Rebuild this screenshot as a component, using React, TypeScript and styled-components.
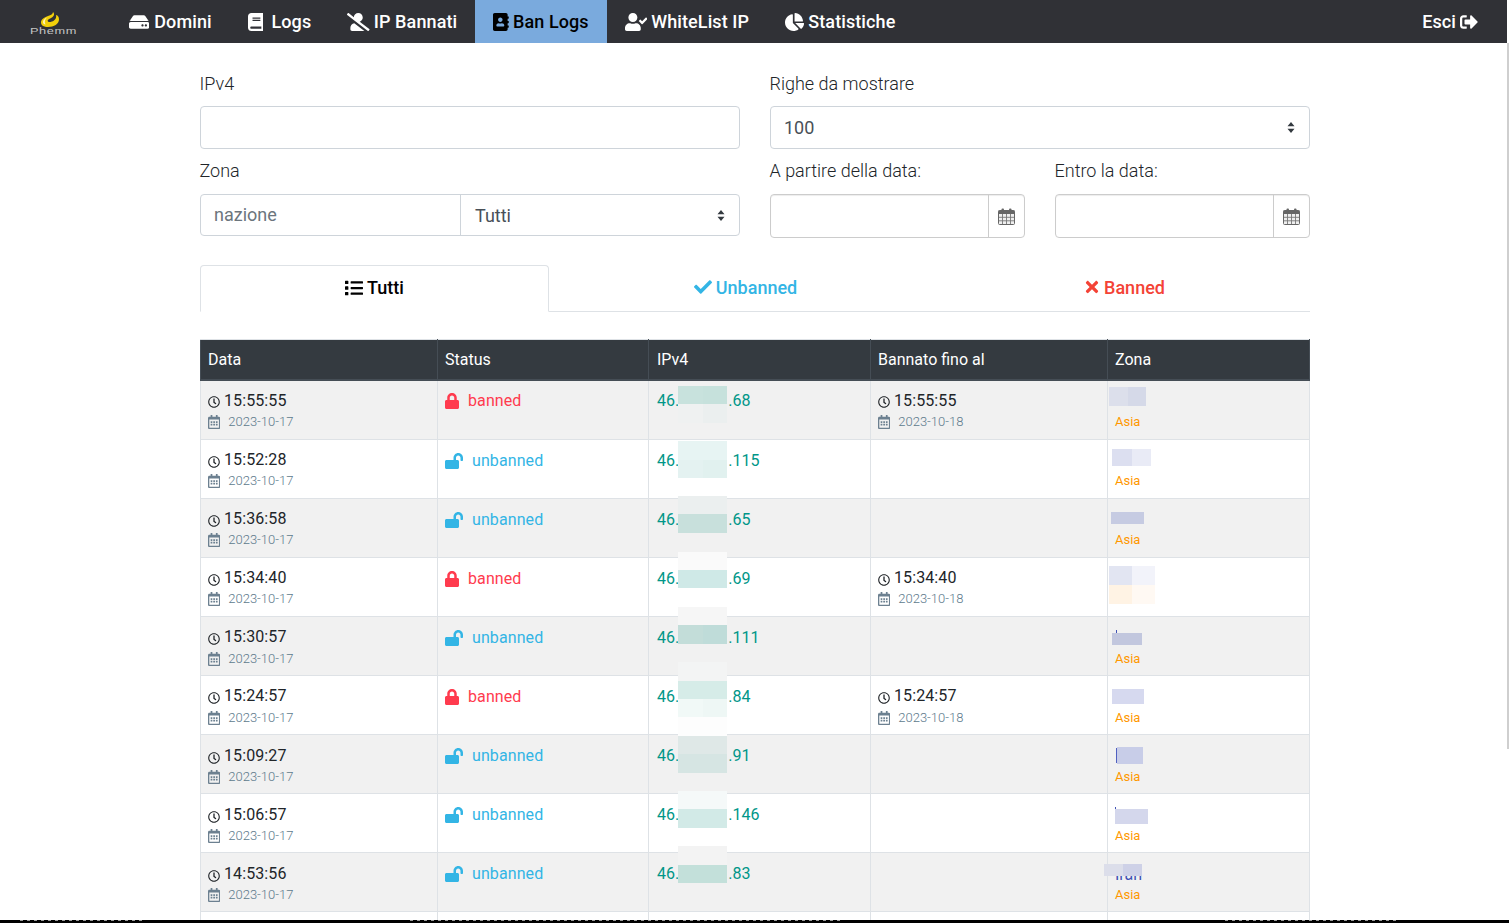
import React from "react"
import styled, { createGlobalStyle } from "styled-components"
import {
  FaAddressBook,
  FaBook,
  FaChartPie,
  FaCheck,
  FaHdd,
  FaList,
  FaLock,
  FaLockOpen,
  FaRegCalendarAlt,
  FaRegClock,
  FaSignOutAlt,
  FaTimes,
  FaUserCheck,
  FaUserSlash,
} from "react-icons/fa"

const GlobalStyle = createGlobalStyle`
  html, body {
    margin: 0;
    padding: 0;
    height: 923px;
    overflow: hidden;
    background: #fff;
    font-family: Roboto, "Liberation Sans", sans-serif;
    color: #212529;
  }
  * { box-sizing: border-box; }
`

const Page = styled.div`
  height: 923px;
  overflow: hidden;
  position: relative;
`

const Navbar = styled.nav`
  height: 43px;
  width: 1507px;
  background: #303136;
  display: flex;
  align-items: stretch;
  padding-left: 30px;
`

const Logo = styled.div`
  width: 81px;
  display: flex;
  flex-direction: column;
  align-items: flex-start;
  padding-top: 12px;
  svg { margin-left: 10px; }
  span {
    font: 400 9px/8px "Liberation Sans", sans-serif;
    color: #c4c4c4;
    letter-spacing: 0.4px;
    transform: scaleX(1.42);
    transform-origin: left center;
  }
`

const NavItem = styled.a<{ $active?: boolean; $gap?: number; $icon: number }>`
  padding: 0 18px;
  display: flex;
  align-items: center;
  gap: ${({ $gap }) => $gap ?? 4}px;
  font-size: 18px;
  font-weight: 500;
  letter-spacing: 0.1px;
  color: ${({ $active }) => ($active ? "#000" : "#fff")};
  background: ${({ $active }) => ($active ? "#7aaadd" : "transparent")};
  white-space: nowrap;
  svg {
    width: ${({ $icon }) => $icon}px;
    height: 18px;
  }
`

const NavRight = styled(NavItem)`
  margin-left: auto;
  margin-right: 11px;
`

const Container = styled.main`
  width: 1110px;
  margin-left: 200px;
`

const FormGrid = styled.div`
  display: grid;
  grid-template-columns: 540px 540px;
  column-gap: 30px;
  padding-top: 28px;
`

const Field = styled.div<{ $h: number }>`
  height: ${({ $h }) => $h}px;
`

const Label = styled.div<{ $gap: number }>`
  font-size: 18px;
  font-weight: 300;
  line-height: 25px;
  margin-bottom: ${({ $gap }) => $gap}px;
  margin-left: -0.5px;
  color: #212529;
`

const Input = styled.div`
  height: 43px;
  border: 1px solid #ced4da;
  border-radius: 4px;
  background: #fff;
`

const Select = styled.div`
  height: 43px;
  border: 1px solid #ced4da;
  border-radius: 4px;
  display: flex;
  align-items: center;
  justify-content: space-between;
  padding: 0 14px 0 13px;
  font-size: 18px;
  color: #495057;
`

const Caret = styled.svg`
  width: 8px;
  height: 11px;
`

const InputGroup = styled.div`
  display: flex;
  height: 42px;
  border: 1px solid #ced4da;
  border-radius: 4px;
`

const Placeholder = styled.div`
  width: 260px;
  border-right: 1px solid #ced4da;
  padding: 0 13px;
  line-height: 40px;
  font-size: 18px;
  color: #6c757d;
`

const GroupSelect = styled.div`
  flex: 1;
  display: flex;
  align-items: center;
  justify-content: space-between;
  padding: 0 14px;
  font-size: 18px;
  color: #495057;
`

const DatesRow = styled.div`
  display: grid;
  grid-template-columns: 255px 255px;
  column-gap: 30px;
`

const DateBox = styled.div`
  display: flex;
  height: 44px;
  border: 1px solid #ccc;
  border-radius: 4px;
  box-shadow: inset 0 1px 1px rgba(0, 0, 0, 0.075);
`

const DateInput = styled.div`
  flex: 1;
`

const DateAddon = styled.div`
  width: 36px;
  border-left: 1px solid #ccc;
  display: flex;
  align-items: center;
  justify-content: center;
`

const Tabs = styled.div`
  display: flex;
  height: 47px;
  margin-top: 17px;
  border-bottom: 1px solid #dee2e6;
`

const Tab = styled.div<{ $active?: boolean; $color: string; $w: number; $gap?: number }>`
  width: ${({ $w }) => $w}px;
  height: ${({ $active }) => ($active ? "47px" : "46px")};
  display: flex;
  align-items: center;
  justify-content: center;
  gap: ${({ $gap }) => $gap ?? 4}px;
  padding-bottom: 2px;
  font-size: 18px;
  font-weight: 500;
  color: ${({ $color }) => $color};
  ${({ $active }) =>
    $active &&
    `
    border: 1px solid #dee2e6;
    border-bottom: 1px solid #fff;
    border-radius: 4px 4px 0 0;
  `}
`

const Table = styled.table`
  width: 1109px;
  margin-top: 27px;
  border-collapse: collapse;
  table-layout: fixed;
  font-size: 16px;
`

const Th = styled.th<{ $w: number; $pad?: number }>`
  width: ${({ $w }) => $w}px;
  height: 40px;
  padding: 0 7px 0 ${({ $pad }) => $pad ?? 7}px;
  text-align: left;
  font-weight: 400;
  color: #fff;
  background: #343a40;
  border: 1px solid #454d55;
  border-top: 1px solid #dee2e6;
  border-bottom: 2px solid #454d55;
`

const Tr = styled.tr<{ $odd: boolean }>`
  background: ${({ $odd }) => ($odd ? "#f1f1f1" : "#fff")};
`

const Td = styled.td`
  height: 59px;
  padding: 10px 7px 0;
  vertical-align: top;
  border: 1px solid #dee2e6;
  position: relative;
  tr:first-child > & {
    height: 60px;
  }
`

const TimeLine = styled.div<{ $top: number }>`
  display: flex;
  align-items: center;
  gap: 4px;
  margin-top: ${({ $top }) => $top}px;
  font-size: 16px;
  letter-spacing: 0.1px;
  line-height: 20px;
  color: #212529;
  svg { font-size: 12px; margin-top: 3px; }
`

const DateLine = styled.div<{ $top: number }>`
  display: flex;
  align-items: center;
  gap: 8px;
  font-size: 13px;
  font-weight: 300;
  line-height: 20px;
  color: #5d7a8c;
  margin-top: ${({ $top }) => $top}px;
  svg { width: 12.25px; height: 14px; color: #6c8090; }
`

const StatusCell = styled.div<{ $banned: boolean }>`
  display: flex;
  align-items: center;
  gap: 9px;
  padding-top: 1px;
  line-height: 20px;
  font-size: 16px;
  letter-spacing: 0.1px;
  color: ${({ $banned }) => ($banned ? "#ff3b4e" : "#33b5e5")};
  svg {
    width: ${({ $banned }) => ($banned ? 14 : 18)}px;
    height: 16px;
  }
  tr:first-child & {
    padding-top: 0;
  }
`

const IpText = styled.div`
  padding: 1px 0 0 1px;
  line-height: 20px;
  color: #009688;
  tr:first-child & {
    padding-top: 0;
  }
`

const IpEnd = styled.span`
  margin-left: 49px;
`

const Patch = styled.span`
  position: absolute;
  display: block;
  pointer-events: none;
`

const ZoneName = styled.div`
  height: 20px;
`

const ZoneIran = styled.div`
  height: 20px;
  line-height: 24px;
  color: #3f51b5;
  font-size: 16px;
`

const Continent = styled.div<{ $top: number }>`
  font-size: 13px;
  line-height: 20px;
  font-weight: 400;
  color: #ff9800;
  margin-top: ${({ $top }) => $top}px;
`

const BottomBar = styled.div`
  position: absolute;
  left: 0;
  right: 0;
  bottom: 0;
  height: 3px;
  background: #000;
`

const Stub = styled.span<{ $x: number; $w: number }>`
  position: absolute;
  top: 0;
  left: ${({ $x }) => $x}px;
  width: ${({ $w }) => $w}px;
  height: 1px;
  background: repeating-linear-gradient(90deg, #999 0 3px, transparent 3px 7px);
`

const Scrollbar = styled.div`
  position: absolute;
  top: 43px;
  right: 0;
  width: 2px;
  height: 706px;
  background: #cfcfcf;
`

const UpDown = () => (
  <Caret viewBox="0 0 8 11">
    <path d="M4 0l3.5 4.2h-7zM4 11L.5 6.8h7z" fill="#343a40" />
  </Caret>
)

const CalendarIcon = () => (
  <svg width="17" height="17" viewBox="0 0 17 17">
    <rect x="0.5" y="2.5" width="16" height="14" rx="1" fill="#efefef" stroke="#666" />
    <rect x="0.5" y="2.5" width="16" height="3.5" fill="#666" />
    <rect x="3.5" y="0.5" width="2.5" height="4" rx="1" fill="#666" />
    <rect x="11" y="0.5" width="2.5" height="4" rx="1" fill="#666" />
    <path
      d="M4.5 6v10M8.5 6v10M12.5 6v10M1 9.3h15M1 12.8h15"
      stroke="#777"
      strokeWidth="0.9"
      fill="none"
    />
  </svg>
)

const PhemmMark = () => (
  <svg width="20" height="15" viewBox="0 0 20 15">
    <path
      d="M13 0C13 2 11 3 8 4 3 6 1 8 1 10.5 1 13.5 4 15 8 15c6 0 11-3 11-7.5C19 5 18 3.5 16 3c.5 2 0 4-2 5.5-2 1.500-5 2-6 1C7 8 9 7 11 6c3-1.500 4-4 2-6z"
      fill="#f2cf0a"
    />
    <path d="M3 10c0-2 2-3.500 4-4.500C5 7.500 4 9.500 5.500 12.500 4 12.500 3 11.500 3 10z" fill="#fff6c0" />
  </svg>
)

type Box = { x: number; y: number; w: number; h: number; c: string }

type Row = {
  time: string
  banned: boolean
  ipEnd: string
  until?: string
  ipPatches: Box[]
  zonePatches: Box[]
  noAsia?: boolean
  zoneText?: string
}

const rows: Row[] = [
  {
    time: "15:55:55",
    banned: true,
    ipEnd: ".68",
    until: "15:55:55",
    ipPatches: [
      { x: 29, y: 6, w: 25, h: 18, c: "#c8e2dd" },
      { x: 54, y: 6, w: 24, h: 18, c: "#c6e1dc" },
      { x: 29, y: 24, w: 25, h: 19, c: "#eff1f1" },
      { x: 54, y: 24, w: 24, h: 19, c: "#ebefef" },
      { x: 29, y: 43, w: 49, h: 16, c: "#f1f1f1" },
    ],
    zonePatches: [
      { x: 1, y: 7, w: 19, h: 19, c: "#dcdfeb" },
      { x: 20, y: 7, w: 18, h: 19, c: "#d5d9e8" },
    ],
  },
  {
    time: "15:52:28",
    banned: false,
    ipEnd: ".115",
    ipPatches: [
      { x: 29, y: 2, w: 49, h: 19, c: "#e7f4f3" },
      { x: 29, y: 21, w: 25, h: 18, c: "#e4f2f1" },
      { x: 54, y: 21, w: 24, h: 18, c: "#e1f1ef" },
    ],
    zonePatches: [
      { x: 4, y: 10, w: 20, h: 17, c: "#dcdff0" },
      { x: 24, y: 10, w: 19, h: 17, c: "#e9ebf6" },
    ],
  },
  {
    time: "15:36:58",
    banned: false,
    ipEnd: ".65",
    ipPatches: [
      { x: 29, y: -2, w: 49, h: 18, c: "#ebefef" },
      { x: 29, y: 16, w: 49, h: 19, c: "#c8e0dc" },
    ],
    zonePatches: [{ x: 3, y: 14, w: 33, h: 12, c: "#c6cbe2" }],
  },
  {
    time: "15:34:40",
    banned: true,
    ipEnd: ".69",
    until: "15:34:40",
    ipPatches: [
      { x: 29, y: -5, w: 49, h: 18, c: "#fafafa" },
      { x: 29, y: 13, w: 49, h: 18, c: "#cfe9e7" },
    ],
    zonePatches: [
      { x: 1, y: 9, w: 23, h: 19, c: "#e2e5f2" },
      { x: 24, y: 9, w: 23, h: 19, c: "#f2f3fa" },
      { x: 1, y: 28, w: 23, h: 19, c: "#fff3e4" },
      { x: 24, y: 28, w: 23, h: 19, c: "#fff9f3" },
    ],
    noAsia: true,
  },
  {
    time: "15:30:57",
    banned: false,
    ipEnd: ".111",
    ipPatches: [
      { x: 29, y: -9, w: 49, h: 18, c: "#f6f6f6" },
      { x: 29, y: 9, w: 25, h: 19, c: "#c3ddd9" },
      { x: 54, y: 9, w: 24, h: 19, c: "#bfdcd9" },
    ],
    zonePatches: [
      { x: 8, y: 14, w: 1, h: 3, c: "#3f51b5" },
      { x: 4, y: 17, w: 30, h: 12, c: "#c2c7de" },
    ],
  },
  {
    time: "15:24:57",
    banned: true,
    ipEnd: ".84",
    until: "15:24:57",
    ipPatches: [
      { x: 29, y: -13, w: 49, h: 19, c: "#f3f4f4" },
      { x: 29, y: 6, w: 49, h: 18, c: "#d6ece8" },
      { x: 29, y: 24, w: 25, h: 18, c: "#f1f9f7" },
      { x: 54, y: 24, w: 24, h: 18, c: "#eef7f5" },
      { x: 29, y: 42, w: 49, h: 19, c: "#fdfdfd" },
    ],
    zonePatches: [{ x: 4, y: 14, w: 32, h: 15, c: "#d6d9ef" }],
  },
  {
    time: "15:09:27",
    banned: false,
    ipEnd: ".91",
    ipPatches: [
      { x: 29, y: 2, w: 49, h: 18, c: "#dfe8e7" },
      { x: 29, y: 20, w: 49, h: 19, c: "#d6e5e3" },
    ],
    zonePatches: [
      { x: 8, y: 14, w: 2, h: 15, c: "#5060c0" },
      { x: 9, y: 13, w: 26, h: 17, c: "#c8cde8" },
    ],
  },
  {
    time: "15:06:57",
    banned: false,
    ipEnd: ".146",
    ipPatches: [
      { x: 29, y: -2, w: 49, h: 18, c: "#f5f9f9" },
      { x: 29, y: 16, w: 49, h: 19, c: "#d2eae7" },
    ],
    zonePatches: [
      { x: 7, y: 14, w: 1, h: 2, c: "#3f51b5" },
      { x: 7, y: 16, w: 33, h: 15, c: "#d4d7ec" },
    ],
  },
  {
    time: "14:53:56",
    banned: false,
    ipEnd: ".83",
    ipPatches: [
      { x: 29, y: -6, w: 49, h: 19, c: "#f3f3f3" },
      { x: 29, y: 13, w: 49, h: 18, c: "#c3e0da" },
    ],
    zonePatches: [
      { x: -4, y: 12, w: 19, h: 12, c: "#dcdeea" },
      { x: 15, y: 12, w: 19, h: 12, c: "#ced1e7" },
    ],
    zoneText: "Iran",
  },
]

const When = ({ time, day, index }: { time: string; day: string; index: number }) => (
  <>
    <TimeLine $top={index >= 6 ? 1 : 0}>
      <FaRegClock />
      {time}
    </TimeLine>
    <DateLine $top={index === 4 || index === 5 ? 2 : 1}>
      <FaRegCalendarAlt />
      {day}
    </DateLine>
  </>
)

const Patches = ({ items }: { items: Box[] }) => (
  <>
    {items.map((p, i) => (
      <Patch
        key={i}
        style={{ left: p.x, top: p.y - 1, width: p.w, height: p.h, background: p.c }}
      />
    ))}
  </>
)

export default function App() {
  return (
    <Page>
      <GlobalStyle />
      <Navbar>
        <Logo>
          <PhemmMark />
          <span>Phemm</span>
        </Logo>
        <NavItem $icon={20.25} $gap={5}>
          <FaHdd />
          Domini
        </NavItem>
        <NavItem $icon={15.75} $gap={8}>
          <FaBook />
          Logs
        </NavItem>
        <NavItem $icon={22.5}>
          <FaUserSlash />
          IP Bannati
        </NavItem>
        <NavItem $active $icon={15.75}>
          <FaAddressBook />
          Ban Logs
        </NavItem>
        <NavItem $icon={22.5}>
          <FaUserCheck />
          WhiteList IP
        </NavItem>
        <NavItem $icon={19.1}>
          <FaChartPie />
          Statistiche
        </NavItem>
        <NavRight $icon={18}>
          Esci
          <FaSignOutAlt />
        </NavRight>
      </Navbar>
      <Container>
        <FormGrid>
          <Field $h={87}>
            <Label $gap={10}>IPv4</Label>
            <Input />
          </Field>
          <Field $h={87}>
            <Label $gap={10}>Righe da mostrare</Label>
            <Select>
              100
              <UpDown />
            </Select>
          </Field>
          <Field $h={90}>
            <Label $gap={11}>Zona</Label>
            <InputGroup>
              <Placeholder>nazione</Placeholder>
              <GroupSelect>
                Tutti
                <UpDown />
              </GroupSelect>
            </InputGroup>
          </Field>
          <Field $h={90}>
            <DatesRow>
              <div>
                <Label $gap={11}>A partire della data:</Label>
                <DateBox>
                  <DateInput />
                  <DateAddon>
                    <CalendarIcon />
                  </DateAddon>
                </DateBox>
              </div>
              <div>
                <Label $gap={11}>Entro la data:</Label>
                <DateBox>
                  <DateInput />
                  <DateAddon>
                    <CalendarIcon />
                  </DateAddon>
                </DateBox>
              </div>
            </DatesRow>
          </Field>
        </FormGrid>
        <Tabs>
          <Tab $active $color="#000" $w={349}>
            <FaList />
            Tutti
          </Tab>
          <Tab $color="#33b5e5" $w={393}>
            <FaCheck />
            Unbanned
          </Tab>
          <Tab $color="#f44336" $w={364} $gap={3}>
            <FaTimes />
            Banned
          </Tab>
        </Tabs>
        <Table>
          <thead>
            <tr>
              <Th $w={237}>Data</Th>
              <Th $w={211}>Status</Th>
              <Th $w={222} $pad={8}>
                IPv4
              </Th>
              <Th $w={237}>Bannato fino al</Th>
              <Th $w={202}>Zona</Th>
            </tr>
          </thead>
          <tbody>
            {rows.map((r, i) => (
              <Tr key={r.time} $odd={i % 2 === 0}>
                <Td>
                  <When time={r.time} day="2023-10-17" index={i} />
                </Td>
                <Td>
                  <StatusCell $banned={r.banned}>
                    {r.banned ? <FaLock /> : <FaLockOpen />}
                    {r.banned ? "banned" : "unbanned"}
                  </StatusCell>
                </Td>
                <Td>
                  <IpText>
                    46.
                    <IpEnd>{r.ipEnd}</IpEnd>
                  </IpText>
                  <Patches items={r.ipPatches} />
                </Td>
                <Td>{r.until && <When time={r.until} day="2023-10-18" index={i} />}</Td>
                <Td>
                  {r.zoneText ? <ZoneIran>{r.zoneText}</ZoneIran> : <ZoneName />}
                  {!r.noAsia && <Continent $top={i >= 4 ? 2 : 1}>Asia</Continent>}
                  <Patches items={r.zonePatches} />
                </Td>
              </Tr>
            ))}
            <Tr $odd={false}>
              <Td />
              <Td />
              <Td />
              <Td />
              <Td />
            </Tr>
          </tbody>
        </Table>
      </Container>
      <Scrollbar />
      <BottomBar>
        <Stub $x={20} $w={125} />
        <Stub $x={410} $w={430} />
        <Stub $x={1225} $w={175} />
      </BottomBar>
    </Page>
  )
}
